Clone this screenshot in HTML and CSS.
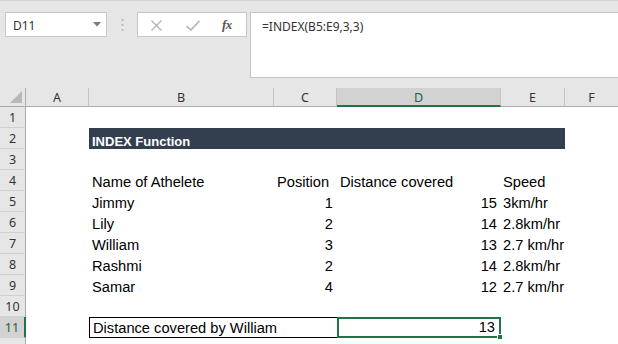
FILE: index.html
```html
<!DOCTYPE html>
<html>
<head>
<meta charset="utf-8">
<link rel="stylesheet" href="styles.css">
</head>
<body>
<div class="toolbar">
  <div class="namebox">
    <span class="nb-text">D11</span>
    <svg class="caret" width="8" height="5" viewBox="0 0 8 5"><path d="M0 0H8L4 4.5Z" fill="#7a7a7a"/></svg>
  </div>
  <div class="sep">
    <svg width="3" height="12" viewBox="0 0 3 12"><rect x="0.5" y="0" width="2" height="2" fill="#bcbcbc"/><rect x="0.5" y="5" width="2" height="2" fill="#bcbcbc"/><rect x="0.5" y="10" width="2" height="2" fill="#bcbcbc"/></svg>
  </div>
  <div class="fxbox">
    <svg class="ic-x" width="11" height="11" viewBox="0 0 11 11"><path d="M0.5 0.5L10.5 10.5M10.5 0.5L0.5 10.5" stroke="#b4b4b4" stroke-width="1.4" fill="none"/></svg>
    <svg class="ic-ok" width="14" height="11" viewBox="0 0 14 11"><path d="M0.5 6L5 10L13.5 0.8" stroke="#b4b4b4" stroke-width="1.6" fill="none"/></svg>
    <span class="fx">fx</span>
  </div>
  <div class="formula">=INDEX(B5:E9,3,3)</div>
</div>

<div class="sheet">
  <div class="ch corner"><span class="tri"></span></div>
  <div class="ch">A</div>
  <div class="ch">B</div>
  <div class="ch">C</div>
  <div class="ch sel">D</div>
  <div class="ch">E</div>
  <div class="ch last">F</div>

  <div class="rh">1</div><div class="c"></div><div class="c"></div><div class="c"></div><div class="c"></div><div class="c"></div><div class="c"></div>

  <div class="rh">2</div><div class="c"></div><div class="c title">INDEX Function</div><div class="c"></div>

  <div class="rh">3</div><div class="c"></div><div class="c"></div><div class="c"></div><div class="c"></div><div class="c"></div><div class="c"></div>

  <div class="rh">4</div><div class="c"></div><div class="c">Name of Athelete</div><div class="c">Position</div><div class="c">Distance covered</div><div class="c sp">Speed</div><div class="c"></div>

  <div class="rh">5</div><div class="c"></div><div class="c">Jimmy</div><div class="c num">1</div><div class="c num">15</div><div class="c sp">3km/hr</div><div class="c"></div>

  <div class="rh">6</div><div class="c"></div><div class="c">Lily</div><div class="c num">2</div><div class="c num">14</div><div class="c sp">2.8km/hr</div><div class="c"></div>

  <div class="rh">7</div><div class="c"></div><div class="c">William</div><div class="c num">3</div><div class="c num">13</div><div class="c sp">2.7 km/hr</div><div class="c"></div>

  <div class="rh">8</div><div class="c"></div><div class="c">Rashmi</div><div class="c num">2</div><div class="c num">14</div><div class="c sp">2.8km/hr</div><div class="c"></div>

  <div class="rh">9</div><div class="c"></div><div class="c">Samar</div><div class="c num">4</div><div class="c num">12</div><div class="c sp">2.7 km/hr</div><div class="c"></div>

  <div class="rh">10</div><div class="c"></div><div class="c"></div><div class="c"></div><div class="c"></div><div class="c"></div><div class="c"></div>

  <div class="rh rsel">11</div><div class="c"></div><div class="c boxed">Distance covered by William</div><div class="c num active">13<span class="handle"></span></div><div class="c"></div><div class="c"></div>

  <div class="rh"></div><div class="c"></div><div class="c"></div><div class="c"></div><div class="c"></div><div class="c"></div><div class="c"></div>
</div>
</body>
</html>
```

FILE: styles.css
```css
* { box-sizing: border-box; }
html, body { margin: 0; padding: 0; }
body {
  width: 618px;
  height: 344px;
  overflow: hidden;
  background: #ffffff;
  font-family: "Liberation Sans", Arial, sans-serif;
}

.toolbar {
  height: 88px;
  background: #e6e6e6;
  border-top: 1px solid #d6d6d6;
  display: flex;
  align-items: flex-start;
  padding: 11px 0 0 5px;
}

.namebox {
  width: 102px;
  height: 25px;
  background: #fff;
  border: 1px solid #c6c6c6;
  display: flex;
  align-items: center;
  justify-content: space-between;
  padding: 0 5px 0 7px;
}
.nb-text {
  font-family: "Noto Sans", "Open Sans", sans-serif;
  font-size: 12px;
  color: #333;
  padding-top: 1px;
}
.caret { margin-top: -1px; }

.sep {
  width: 30px;
  height: 25px;
  display: flex;
  align-items: center;
  justify-content: center;
}

.fxbox {
  width: 110px;
  height: 25px;
  background: #fff;
  border: 1px solid #c6c6c6;
  display: flex;
  align-items: center;
  padding-left: 13px;
}
.ic-x { margin-top: 1px; }
.ic-ok { margin-left: 24px; margin-top: 1px; }
.fx {
  margin-left: 22px;
  font-family: "Liberation Serif", "Times New Roman", serif;
  font-style: italic;
  font-weight: bold;
  font-size: 13px;
  color: #555;
  letter-spacing: -0.5px;
}

.formula {
  margin-left: 3px;
  flex: 1;
  height: 66px;
  background: #fff;
  border: 1px solid #c6c6c6;
  border-right: none;
  padding: 5px 0 0 11px;
  font-family: "Noto Sans", "Open Sans", sans-serif;
  font-size: 12px;
  color: #333;
}

.sheet {
  display: grid;
  grid-template-columns: 26px 63px 185px 63px 164px 64px 1fr;
  grid-template-rows: 19px;
  grid-auto-rows: 21px;
}

.ch {
  background: #e6e6e6;
  border-right: 1px solid #c3c3c3;
  border-bottom: 1px solid #ababab;
  font-family: "Noto Sans", "Open Sans", sans-serif;
  font-size: 12.5px;
  color: #333;
  display: flex;
  align-items: center;
  justify-content: center;
  padding-top: 1px;
}
.ch.last { border-right: none; }
.ch.corner {
  position: relative;
  border-right: 1px solid #ababab;
}
.tri {
  position: absolute;
  right: 3px;
  bottom: 3px;
  width: 0;
  height: 0;
  border-left: 12px solid transparent;
  border-bottom: 12px solid #b7b7b7;
}
.ch.sel {
  background: #d2d2d2;
  color: #1f5f43;
  border-bottom: 2px solid #217346;
  padding-top: 2px;
}

.rh {
  background: #e6e6e6;
  border-right: 1px solid #ababab;
  border-bottom: 1px solid #d0d0d0;
  font-family: "Noto Sans", "Open Sans", sans-serif;
  font-size: 12.5px;
  color: #333;
  display: flex;
  align-items: center;
  justify-content: center;
  padding-top: 1px;
}
.rh.rsel {
  background: #d2d2d2;
  color: #1f5f43;
  border-right: 2px solid #217346;
}

.c {
  background: #fff;
  font-size: 14.67px;
  line-height: 17px;
  color: #000;
  display: flex;
  align-items: flex-end;
  padding: 0 3px;
  white-space: nowrap;
}
.c.num { justify-content: flex-end; padding-right: 4px; }
.c.sp { padding-left: 2px; }

.title {
  grid-column: span 4;
  background: #333f4f;
  color: #fff;
  font-weight: bold;
  font-size: 13px;
  line-height: 14px;
  padding-bottom: 0;
}

.boxed {
  grid-column: span 2;
  border: 1px solid #000;
  border-right: none;
}

.active {
  position: relative;
  border: 2px solid #217346;
  padding-right: 2px;
}
.handle {
  position: absolute;
  right: -4px;
  bottom: -4px;
  width: 6px;
  height: 6px;
  background: #217346;
  border: 1px solid #fff;
}
```
